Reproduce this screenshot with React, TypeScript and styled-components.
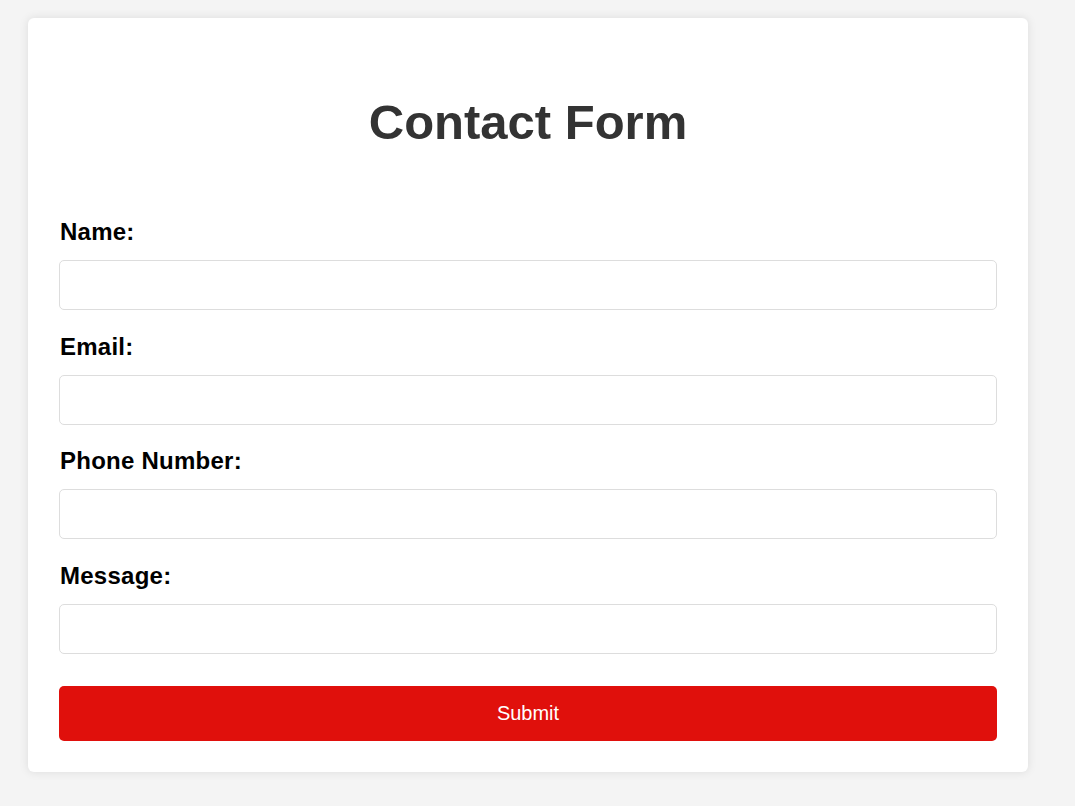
import styled, { createGlobalStyle } from 'styled-components';

const GlobalStyle = createGlobalStyle`
  * {
    box-sizing: border-box;
  }

  body {
    margin: 0;
    padding: 18px 28px;
    background: #f4f4f4;
    font-family: 'Liberation Sans', Arial, sans-serif;
  }
`;

const fields = [
  { id: 'name', label: 'Name:', type: 'text' },
  { id: 'email', label: 'Email:', type: 'email' },
  { id: 'phone', label: 'Phone Number:', type: 'tel' },
  { id: 'message', label: 'Message:', type: 'text' },
];

function App() {
  return (
    <>
      <GlobalStyle />
      <Card>
        <Title>Contact Form</Title>
        <Form onSubmit={(e) => e.preventDefault()}>
          {fields.map((f) => (
            <Field key={f.id}>
              <Label htmlFor={f.id}>{f.label}</Label>
              <Input id={f.id} name={f.id} type={f.type} />
            </Field>
          ))}
          <SubmitButton type="submit">Submit</SubmitButton>
        </Form>
      </Card>
    </>
  );
}

const Card = styled.div`
  width: 1000px;
  padding: 31px;
  background: #fff;
  border-radius: 6px;
  box-shadow: 0 0 10px rgba(0, 0, 0, 0.1);
`;

const Title = styled.h1`
  margin: 46px 0 68px;
  text-align: center;
  font-size: 49px;
  line-height: 55px;
  font-weight: 700;
  color: #333;
`;

const Form = styled.form`
  display: flex;
  flex-direction: column;
`;

const Field = styled.div`
  display: flex;
  flex-direction: column;
  gap: 14px;
  margin-bottom: 22.5px;
`;

const Label = styled.label`
  padding-left: 1px;
  font-size: 24px;
  line-height: 28px;
  font-weight: 700;
  letter-spacing: 0.25px;
  color: #000;
`;

const Input = styled.input`
  width: 100%;
  height: 50px;
  padding: 10px;
  border: 1px solid #ddd;
  border-radius: 5px;
  font-size: 16px;
  font-family: inherit;
  outline: none;
`;

const SubmitButton = styled.button`
  width: 100%;
  height: 55px;
  margin-top: 10px;
  border: none;
  border-radius: 5px;
  background: #e0100c;
  color: #fff;
  font-size: 20px;
  font-family: inherit;
  cursor: pointer;
`;

export default App;
